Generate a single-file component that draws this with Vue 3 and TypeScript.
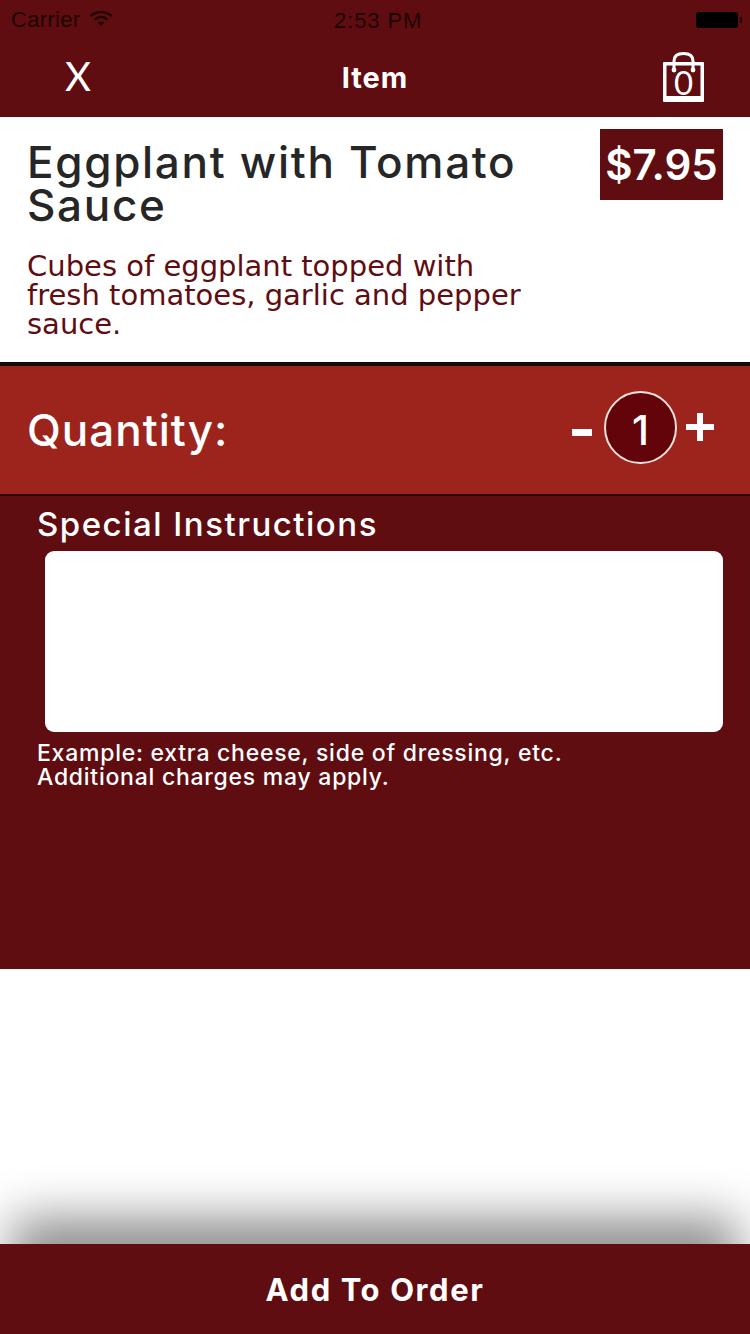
<script setup lang="ts">
import { ref } from "vue";

const quantity = ref(1);
const instructions = ref("");
</script>

<template>
  <div class="screen">
    <header class="header">
      <div class="status">
        <div class="status-left">
          <span>Carrier</span>
          <svg class="wifi" width="24" height="17" viewBox="0 0 24 17">
            <path d="M1.5 6 C7.5 .8 16.5 .8 22.5 6" fill="none" stroke="#1c0304" stroke-width="2.4" />
            <path d="M5.5 9.6 C9.5 6.4 14.5 6.4 18.5 9.6" fill="none" stroke="#1c0304" stroke-width="2.4" />
            <path d="M8.8 12.6 C10.8 11.1 13.2 11.1 15.2 12.6 L12 16 Z" fill="#1c0304" />
          </svg>
        </div>
        <span class="status-time">2:53 PM</span>
        <div class="battery"><i></i></div>
      </div>
      <div class="nav">
        <span class="close">X</span>
        <span class="nav-title">Item</span>
        <div class="bag">
          <svg width="44" height="52" viewBox="0 0 44 52" fill="#fff">
            <path fill-rule="evenodd" d="M1 11 Q1 10 2 10 H41 Q42 10 42 11 V49 Q42 50 41 50 H2 Q1 50 1 49 Z M4.5 13.5 V44 H38.5 V13.5 Z" />
            <path d="M12 17 V9 C12 3 16 1.5 21.5 1.5 C27 1.5 31 3 31 9 V17" fill="none" stroke="#fff" stroke-width="3" />
            <circle cx="12" cy="18" r="2.4" />
            <circle cx="31" cy="18" r="2.4" />
          </svg>
          <span class="bag-count">0</span>
        </div>
      </div>
    </header>

    <section class="item">
      <div class="item-text">
        <h1 class="item-name">Eggplant with Tomato Sauce</h1>
        <p class="item-desc">Cubes of eggplant topped with fresh tomatoes, garlic and pepper sauce.</p>
      </div>
      <div class="price">$7.95</div>
    </section>

    <section class="quantity">
      <span class="quantity-label">Quantity:</span>
      <div class="stepper">
        <button class="step minus" type="button" aria-label="Less" @click="quantity = Math.max(1, quantity - 1)"></button>
        <div class="count">{{ quantity }}</div>
        <button class="step plus" type="button" aria-label="More" @click="quantity++"></button>
      </div>
    </section>

    <section class="special">
      <h2 class="special-title">Special Instructions</h2>
      <textarea v-model="instructions" class="special-input"></textarea>
      <p class="special-hint">Example: extra cheese, side of dressing, etc.<br />Additional charges may apply.</p>
    </section>

    <div class="spacer"></div>

    <button class="add" type="button">Add To Order</button>
  </div>
</template>

<style scoped>
.screen {
  width: 750px;
  height: 1334px;
  display: flex;
  flex-direction: column;
  overflow: hidden;
  background: #fff;
  font-family: Inter, "Liberation Sans", sans-serif;
}

.header {
  height: 117px;
  flex-shrink: 0;
  background: #600d11;
}

.status {
  height: 40px;
  padding: 0 12px 0 11px;
  display: flex;
  align-items: center;
  justify-content: space-between;
  position: relative;
  color: #1c0304;
  font-family: "Liberation Sans", sans-serif;
  font-size: 22px;
  letter-spacing: 0.3px;
}

.status-left {
  display: flex;
  align-items: center;
  gap: 9px;
}

.wifi {
  margin-top: -4px;
}

.status-time {
  position: absolute;
  left: 334px;
  top: 8px;
  letter-spacing: 0.9px;
}

.battery {
  width: 42px;
  height: 16px;
  position: relative;
  background: #000;
  border-radius: 3px;
}

.battery i {
  position: absolute;
  right: -4px;
  top: 5px;
  width: 2px;
  height: 6px;
  background: #2a0506;
}

.nav {
  height: 77px;
  padding: 0 44px 0 65px;
  display: flex;
  align-items: center;
  justify-content: space-between;
  position: relative;
  color: #fff;
}

.close {
  font-family: Lato, sans-serif;
  font-size: 40px;
  font-weight: 400;
  line-height: 1;
  margin-top: -5px;
}

.nav-title {
  position: absolute;
  left: 0;
  right: 0;
  top: 20px;
  text-align: center;
  font-size: 29px;
  font-weight: 700;
  letter-spacing: 1px;
}

.bag {
  width: 44px;
  height: 52px;
  position: relative;
  margin-top: -2px;
}

.bag svg {
  display: block;
}

.bag-count {
  position: absolute;
  left: 0;
  right: 1px;
  top: 14px;
  text-align: center;
  font-family: Lato, sans-serif;
  font-size: 33px;
  font-weight: 400;
  line-height: 32px;
}

.item {
  height: 245px;
  flex-shrink: 0;
  padding: 12px 27px 0 27px;
  display: flex;
  justify-content: space-between;
  align-items: flex-start;
  box-sizing: border-box;
}

.item-text {
  width: 510px;
}

.item-name {
  margin: 12px 0 0;
  color: #262626;
  font-size: 44px;
  line-height: 43px;
  font-weight: 500;
  letter-spacing: 1.7px;
}

.item-desc {
  margin: 25px 0 0;
  color: #600d11;
  font-family: "DejaVu Sans", sans-serif;
  font-size: 29px;
  line-height: 29px;
}

.price {
  width: 123px;
  height: 71px;
  flex-shrink: 0;
  display: flex;
  align-items: center;
  justify-content: center;
  background: #600d11;
  color: #fff;
  font-size: 42px;
  font-weight: 600;
}

.quantity {
  height: 134px;
  flex-shrink: 0;
  box-sizing: border-box;
  border-top: 4px solid #16090a;
  border-bottom: 2px solid #2c0607;
  padding: 0 36px 0 27px;
  display: flex;
  align-items: center;
  justify-content: space-between;
  background: #9d241d;
  color: #fff;
}

.quantity-label {
  font-size: 44px;
  font-weight: 500;
  letter-spacing: 1px;
}

.stepper {
  display: flex;
  align-items: center;
  gap: 9px;
  margin-top: -6px;
}

.step {
  height: 28px;
  padding: 0;
  border: 0;
  position: relative;
  background: transparent;
}

.minus {
  width: 20px;
  margin-right: 3px;
}

.minus::before {
  content: "";
  position: absolute;
  left: 0;
  top: 16px;
  width: 20px;
  height: 7px;
  background: #fff;
}

.plus {
  width: 28px;
}

.plus::before {
  content: "";
  position: absolute;
  left: 0;
  top: 11px;
  width: 28px;
  height: 6px;
  background: #fff;
}

.plus::after {
  content: "";
  position: absolute;
  left: 11px;
  top: 0;
  width: 6px;
  height: 28px;
  background: #fff;
}

.count {
  width: 73px;
  height: 73px;
  box-sizing: border-box;
  padding-top: 5px;
  display: flex;
  align-items: center;
  justify-content: center;
  border: 2px solid #fbe3dc;
  border-radius: 50%;
  background: #620409;
  color: #fff;
  font-size: 41px;
  font-weight: 500;
}

.special {
  height: 473px;
  flex-shrink: 0;
  box-sizing: border-box;
  padding: 8px 27px 0 37px;
  display: flex;
  flex-direction: column;
  background: #600d11;
  color: #fff;
}

.special-title {
  margin: 0;
  font-size: 33px;
  line-height: 40px;
  font-weight: 500;
  letter-spacing: 1.5px;
}

.special-input {
  display: block;
  width: 678px;
  height: 181px;
  margin: 7px 0 0 8px;
  padding: 0;
  box-sizing: border-box;
  flex-shrink: 0;
  border: 0;
  border-radius: 9px;
  background: #fff;
  resize: none;
  outline: none;
}

.special-hint {
  margin: 9px 0 0;
  font-size: 23px;
  line-height: 24px;
  font-weight: 500;
  letter-spacing: 0.75px;
}

.spacer {
  flex: 1;
}

.add {
  height: 90px;
  flex-shrink: 0;
  padding: 0;
  border: 0;
  background: #600d11;
  box-shadow: 0 -36px 50px -12px rgba(0, 0, 0, 0.48);
  color: #fff;
  font-family: inherit;
  font-size: 31px;
  font-weight: 700;
  letter-spacing: 1.6px;
}
</style>
